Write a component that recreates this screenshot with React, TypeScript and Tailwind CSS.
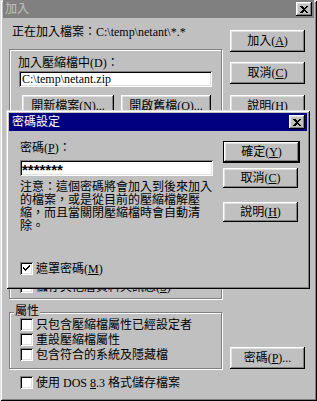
import React from 'react';

// Win95 style bevels
const raised =
  'shadow-[inset_-1px_-1px_0_#000,inset_1px_1px_0_#fff,inset_-2px_-2px_0_#808080,inset_2px_2px_0_#dfdfdf]';
const sunken =
  'shadow-[inset_1px_1px_0_#808080,inset_-1px_-1px_0_#fff,inset_2px_2px_0_#000,inset_-2px_-2px_0_#dfdfdf]';
const frame =
  'shadow-[inset_1px_1px_0_#dfdfdf,inset_-1px_-1px_0_#000,inset_2px_2px_0_#fff,inset_-2px_-2px_0_#808080]';
const etched = 'border border-[#808080] shadow-[1px_1px_0_#fff,inset_1px_1px_0_#fff]';

function CloseButton() {
  return (
    <div className={`flex h-[14px] w-[16px] items-center justify-center bg-[#c0c0c0] ${raised}`}>
      <svg width="8" height="7" viewBox="0 0 8 7" shapeRendering="crispEdges">
        <path d="M0 0h2l2 2l2-2h2l-3 3.5l3 3.5h-2l-2-2l-2 2h-2l3-3.5z" fill="#000" />
      </svg>
    </div>
  );
}

function Button({ children, className = '' }: { children: React.ReactNode; className?: string }) {
  return (
    <div className={`flex w-[75px] items-center justify-center bg-[#c0c0c0] ${raised} ${className}`}>
      {children}
    </div>
  );
}

function Checkbox({ checked = false }: { checked?: boolean }) {
  return (
    <div className={`relative h-[13px] w-[13px] shrink-0 bg-white ${sunken}`}>
      {checked && (
        <svg className="absolute inset-0" width="13" height="13" viewBox="0 0 13 13" shapeRendering="crispEdges">
          <path d="M3 5v2l2 2l5-5v-2l-5 5z" fill="#000" />
        </svg>
      )}
    </div>
  );
}

function CheckRow({ label, checked }: { label: React.ReactNode; checked?: boolean }) {
  return (
    <div className="flex h-[13px] items-center gap-[3px]">
      <Checkbox checked={checked} />
      <span className="whitespace-nowrap">{label}</span>
    </div>
  );
}

export default function App() {
  return (
    <div
      className={`relative h-[401px] w-[317px] overflow-hidden bg-[#c0c0c0] px-[3px] pb-[3px] font-['Liberation_Serif','Noto_Sans_CJK_TC',serif] text-[12px] leading-[12px] text-black ${frame}`}
    >
      {/* inactive title bar */}
      <div className="flex h-[18px] items-center justify-between bg-[#808080] pl-[2px] pr-[2px]">
        <span className="text-[#c0c0c0]">加入</span>
        <CloseButton />
      </div>

      <div className="flex gap-[8px] pl-[6px]">
        <div className="flex w-[213px] flex-col">
          <div className="ml-[3px] mt-[8px] h-[12px] whitespace-nowrap">正在加入檔案：C:\temp\netant\*.*</div>

          <div className={`mt-[11px] flex h-[250px] flex-col pb-[5px] pl-[8px] pt-[7px] ${etched}`}>
            <div className="h-[12px]">加入壓縮檔中(D)：</div>
            <div className={`ml-[1px] mt-[2px] flex h-[16px] w-[193px] items-center bg-white pl-[3px] ${sunken}`}>
              C:\temp\netant.zip
            </div>
            <div className="ml-[4px] mt-[8px] flex gap-[7px]">
              <Button className="h-[22px] w-[92px]">
                開新檔案(<u>N</u>)...
              </Button>
              <Button className="h-[22px] w-[90px]">
                開啟舊檔(<u>O</u>)...
              </Button>
            </div>
            <div className="flex-1" />
            <div className="ml-[2px]">
              <CheckRow label={<>儲存其他層資料夾訊息(<u>S</u>)</>} />
            </div>
          </div>

          <div className={`relative mt-[13px] flex h-[57px] flex-col gap-[2px] pl-[10px] pt-[5px] ${etched}`}>
            <span className="absolute left-[4px] top-[-8px] bg-[#c0c0c0] px-[1px]">屬性</span>
            <CheckRow label="只包含壓縮檔屬性已經設定者" />
            <CheckRow label="重設壓縮檔屬性" />
            <CheckRow label="包含符合的系統及隱藏檔" />
          </div>

          <div className="ml-[11px] mt-[7px]">
            <CheckRow
              label={
                <>
                  使用 DOS <u>8</u>.3 格式儲存檔案
                </>
              }
            />
          </div>
        </div>

        <div className="flex flex-col">
          <Button className="mt-[12px] h-[22px]">
            加入(<u>A</u>)
          </Button>
          <Button className="mt-[10px] h-[22px]">
            取消(<u>C</u>)
          </Button>
          <Button className="mt-[11px] h-[22px]">
            說明(<u>H</u>)
          </Button>
          <Button className="mt-[230px] h-[22px]">
            密碼(<u>P</u>)...
          </Button>
        </div>
      </div>

      {/* password dialog on top */}
      <div className={`absolute left-[6px] top-[110px] flex h-[179px] w-[304px] flex-col bg-[#c0c0c0] p-[3px] ${frame}`}>
        <div className="flex h-[18px] items-center justify-between bg-[#000080] pl-[3px] pr-[2px]">
          <span className="text-white">密碼設定</span>
          <CloseButton />
        </div>
        <div className="flex gap-[10px] pl-[11px]">
          <div className="flex w-[193px] flex-col">
            <div className="mt-[11px] h-[12px]">
              密碼(<u>P</u>)：
            </div>
            <div
              className={`mt-[6px] flex h-[16px] items-center bg-white pl-[2px] pt-[3px] font-['Liberation_Sans',sans-serif] text-[15px] leading-[15px] font-bold ${sunken}`}
            >
              *******
            </div>
            <div className="mt-[5px] whitespace-nowrap leading-[13px]">
              注意：這個密碼將會加入到後來加入
              <br />
              的檔案，或是從目前的壓縮檔解壓
              <br />
              縮，而且當關閉壓縮檔時會自動清
              <br />
              除。
            </div>
            <div className="mt-[29px]">
              <CheckRow checked label={<>遮罩密碼(<u>M</u>)</>} />
            </div>
          </div>
          <div className="flex flex-col">
            <div className="mt-[10px] border border-black">
              <Button className="h-[20px] w-[73px]">
                確定(<u>Y</u>)
              </Button>
            </div>
            <Button className="mt-[5px] h-[20px]">
              取消(<u>C</u>)
            </Button>
            <Button className="mt-[14px] h-[20px]">
              說明(<u>H</u>)
            </Button>
          </div>
        </div>
      </div>
    </div>
  );
}
